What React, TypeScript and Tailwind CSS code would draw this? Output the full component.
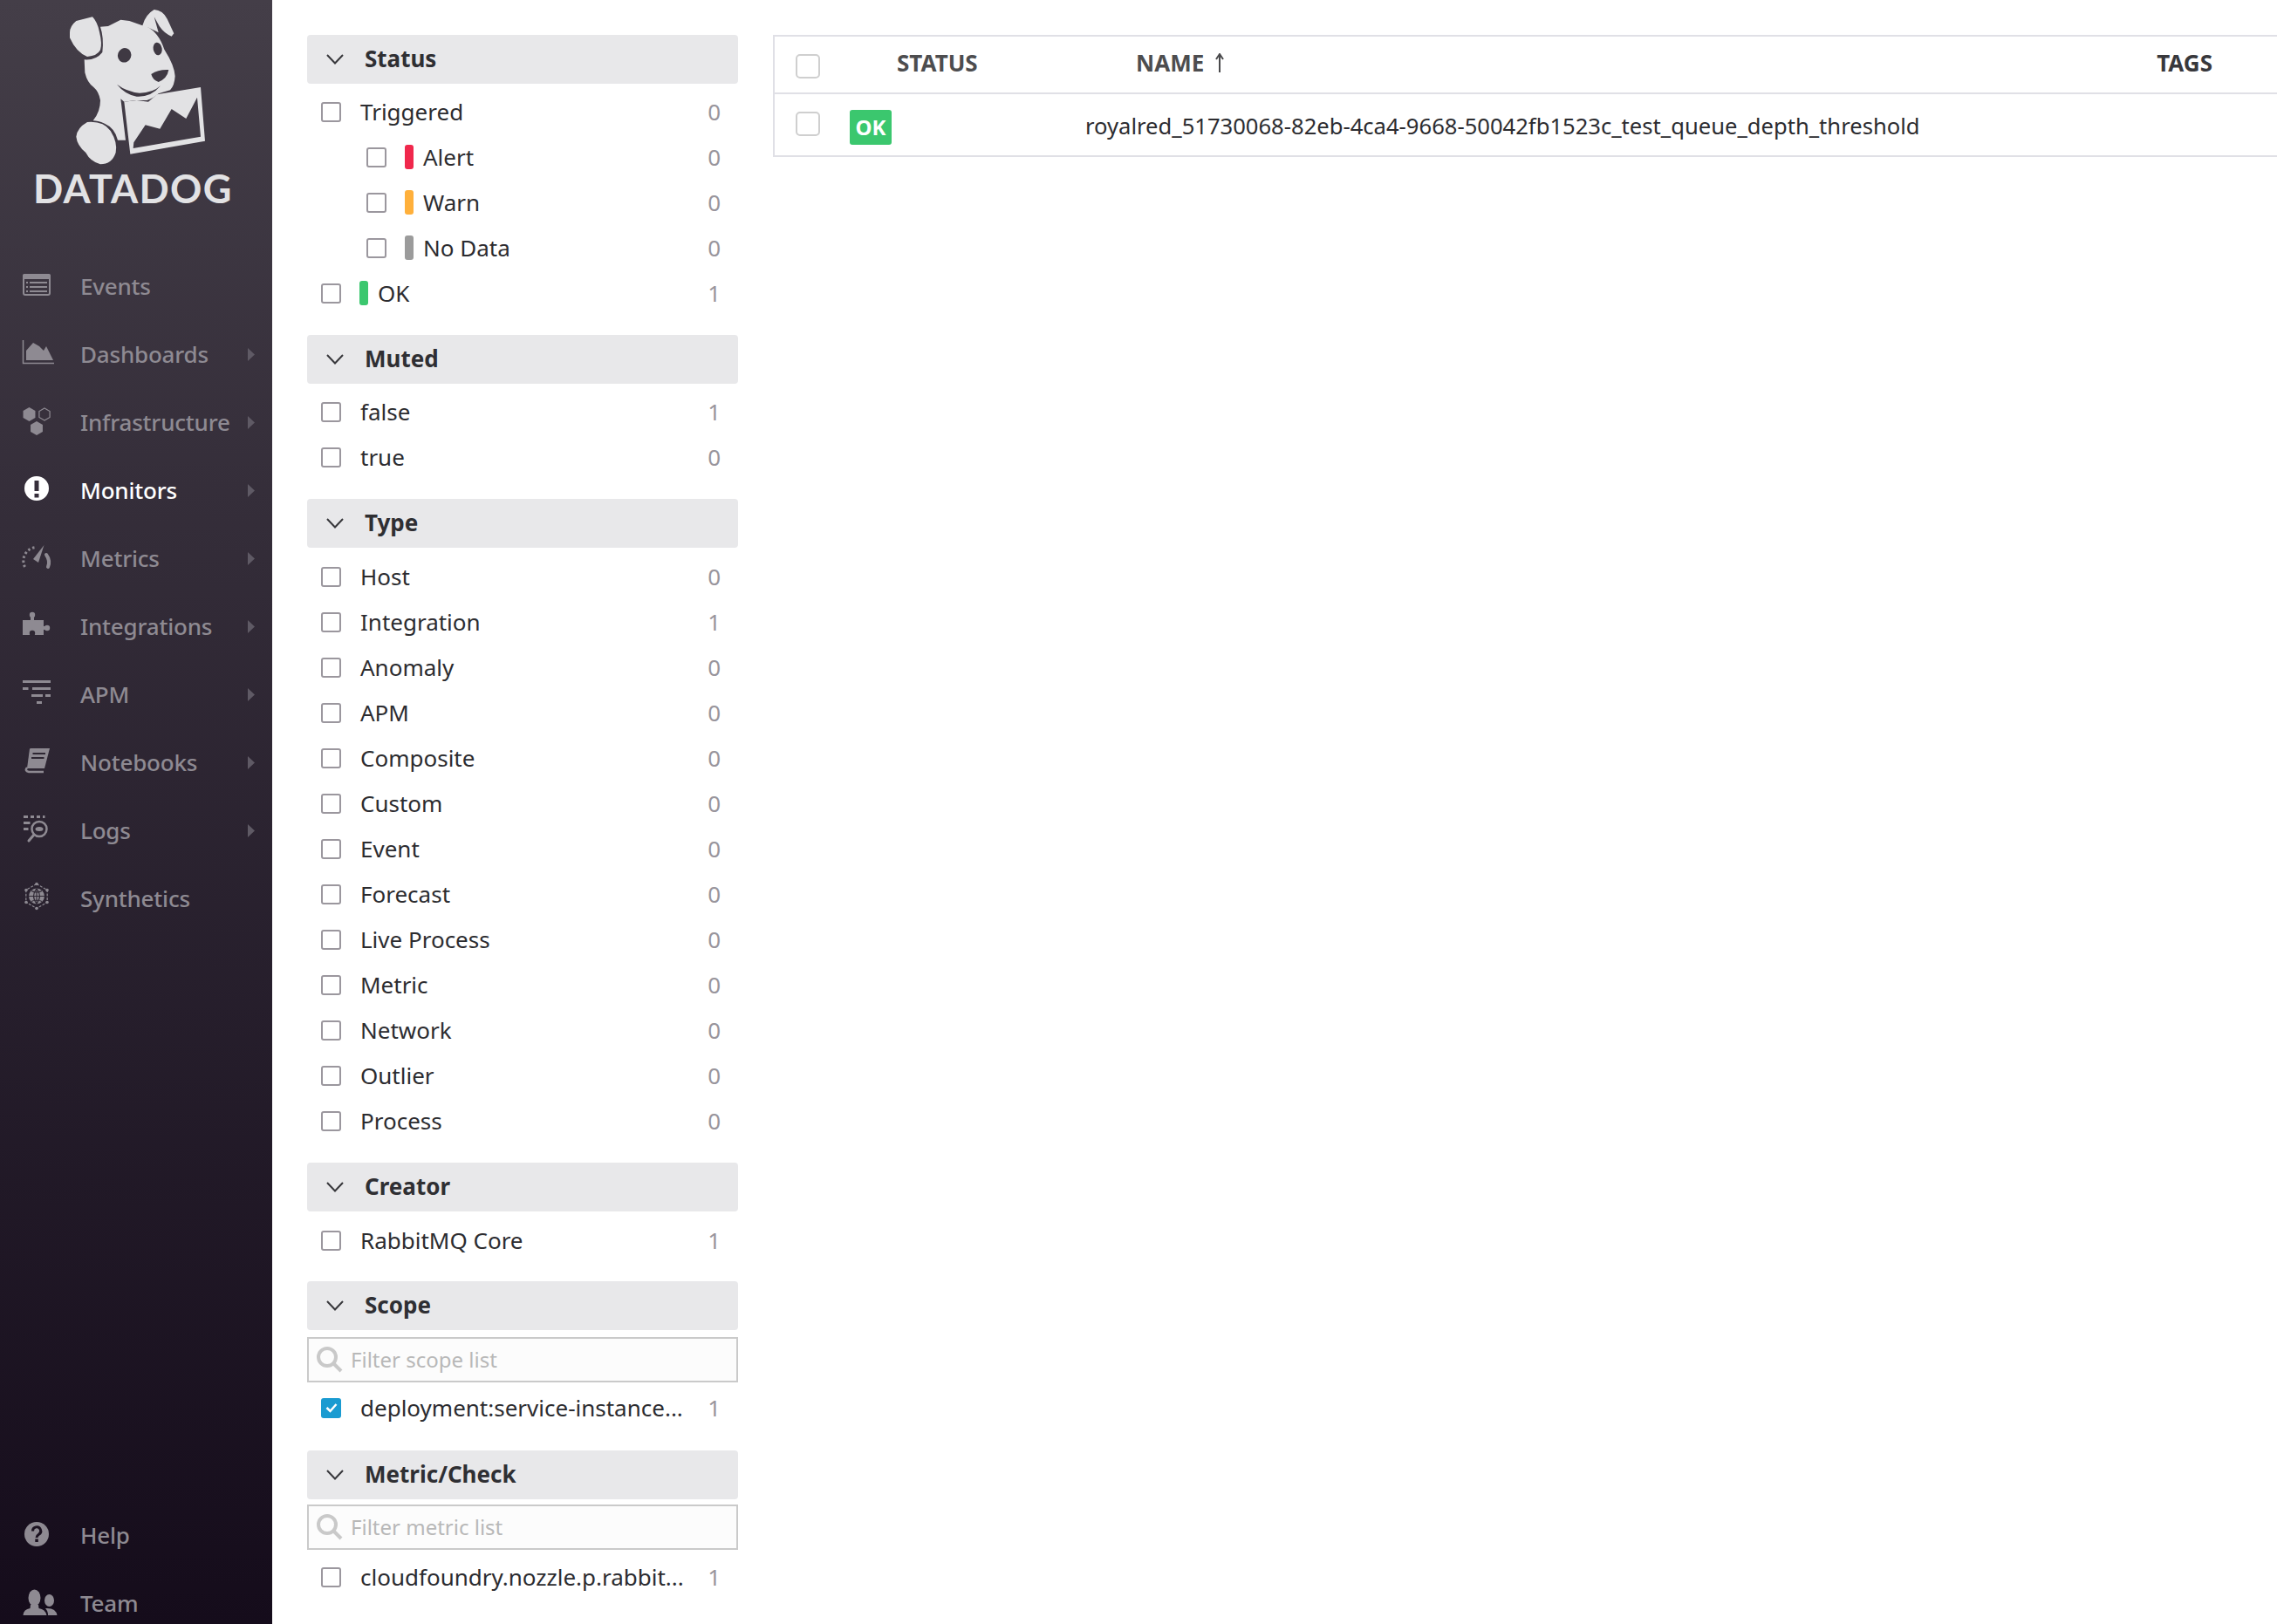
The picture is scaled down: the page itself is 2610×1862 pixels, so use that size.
import React from "react";

const hex = (cx: number, cy: number, r: number) =>
  [
    [cx, cy - r],
    [cx + 0.87 * r, cy - 0.5 * r],
    [cx + 0.87 * r, cy + 0.5 * r],
    [cx, cy + r],
    [cx - 0.87 * r, cy + 0.5 * r],
    [cx - 0.87 * r, cy - 0.5 * r],
  ]
    .map((p) => p.join(","))
    .join(" ");

const NavIcon = ({ name }: { name: string }) => {
  const hole = "#2e2733";
  return (
    <svg viewBox="0 0 44 40" className="h-10 w-11 shrink-0 overflow-visible" fill="currentColor">
      {name === "events" && (
        <>
          <rect x="3" y="7" width="30" height="23" rx="2" fill="none" stroke="currentColor" strokeWidth="2" />
          <rect x="2" y="6" width="32" height="6" rx="2" />
          <path d="M6 15h2v2H6zM10 15h20v2H10zM6 20h2v2H6zM10 20h20v2H10zM6 25h2v2H6zM10 25h20v2H10z" />
        </>
      )}
      {name === "dashboards" && (
        <>
          <path d="M2.500 4V30.500H38" fill="none" stroke="currentColor" strokeWidth="1.500" />
          <polygon points="6,27 6,16 14,7 21,11 26,16 29,11 37,27" />
        </>
      )}
      {name === "infrastructure" && (
        <>
          <polygon points={hex(9.5, 11, 8)} />
          <polygon points={hex(27, 11, 7)} fill="none" stroke="currentColor" strokeWidth="1.200" />
          <polygon points={hex(18, 27, 8)} />
        </>
      )}
      {name === "monitors" && (
        <path
          fillRule="evenodd"
          d="M18 4a14 14 0 1 1 0 28a14 14 0 0 1 0-28zM15.500 9v12h5V9zM15.500 24v4.500h5V24z"
        />
      )}
      {name === "metrics" && (
        <>
          <path d="M4.500 30A15.500 15.500 0 0 1 17 7.500" fill="none" stroke="currentColor" strokeWidth="3" strokeDasharray="2.500 2.700" />
          <polygon points="26.500,5 14,21 20,25" />
          <path d="M29 16Q34 23 31 30" fill="none" stroke="currentColor" strokeWidth="4" strokeLinecap="round" />
        </>
      )}
      {name === "integrations" && (
        <>
          <rect x="2" y="13" width="24" height="17" />
          <rect x="11" y="8" width="4" height="7" />
          <circle cx="13" cy="7" r="3.200" />
          <rect x="24" y="20" width="5" height="4" />
          <circle cx="30" cy="22" r="3.200" />
          <circle cx="13" cy="28" r="3.200" fill={hole} />
          <rect x="11.500" y="26" width="3" height="5" fill={hole} />
        </>
      )}
      {name === "apm" && (
        <path d="M2 4h32v3H2zM2 12h6.500v3H2zM13 12h21v3H13zM12 20h13v3H12zM28 20h6v3h-6zM18 28h6v3h-6z" />
      )}
      {name === "notebooks" && (
        <>
          <path d="M10 4.500Q10.500 4 11.500 4H33L27 27H7z" />
          <path d="M7 26Q4 30 9 31H26" fill="none" stroke="currentColor" strokeWidth="2.500" />
          <path d="M13.500 10H28M12 15H26.500" stroke={hole} strokeWidth="2" />
        </>
      )}
      {name === "logs" && (
        <>
          <path d="M3 3h5v3H3zM11 3h4v3h-4zM18 3h4v3h-4zM25 3h2.500v3H25zM3 10h7.500v3H3zM3 17h5.500v3H3z" />
          <circle cx="21" cy="18.500" r="8.500" fill="none" stroke="currentColor" strokeWidth="2.500" />
          <path d="M15 25L9 32" stroke="currentColor" strokeWidth="3" strokeLinecap="round" />
          <ellipse cx="21" cy="18.500" rx="4.500" ry="2.500" />
        </>
      )}
      {name === "synthetics" && (
        <>
          <polygon points={hex(18, 17.500, 14)} fill="none" stroke="currentColor" strokeWidth="1.200" strokeDasharray="3 1.500" />
          <circle cx="18" cy="17.500" r="9" />
          <path d="M9 17.500h18M18 8.500v18M12 11.500q6 3 12 0M12 23.500q6-3 12 0M18 8.500q-7 9 0 18M18 8.500q7 9 0 18" fill="none" stroke={hole} strokeWidth="1.100" />
          <circle cx="18" cy="3.500" r="1.800" />
          <circle cx="30" cy="10.500" r="1.800" />
          <circle cx="30" cy="24.500" r="1.800" />
          <circle cx="18" cy="31.500" r="1.800" />
          <circle cx="6" cy="24.500" r="1.800" />
          <circle cx="6" cy="10.500" r="1.800" />
        </>
      )}
      {name === "help" && (
        <>
          <circle cx="18" cy="19" r="14" />
          <path d="M13.500 15.500a4.600 4.600 0 1 1 7 3.800c-2 1.300-2.500 2-2.500 3.700" fill="none" stroke="#1b1220" strokeWidth="3" />
          <rect x="16.300" y="24.500" width="3.500" height="3.500" fill="#1b1220" />
        </>
      )}
      {name === "team" && (
        <>
          <ellipse cx="32.500" cy="17" rx="5.500" ry="7" />
          <path d="M28 26Q40 25 41.500 34H31Q31 29 28 26z" />
          <ellipse cx="15.500" cy="14" rx="7" ry="9.500" />
          <path d="M11 22H20L20.500 26Q28 27 29.500 34H2.500Q3 27 10.500 26z" />
        </>
      )}
    </svg>
  );
};

const NavRow = ({ icon, label, arrow = true, active = false }: { icon: string; label: string; arrow?: boolean; active?: boolean }) => (
  <div className={`flex h-[78px] shrink-0 items-center pl-6 pr-5 ${active ? "text-white" : "text-[#8e8a92]"}`}>
    <NavIcon name={icon} />
    <span className="ml-6 text-[26px] font-medium leading-none tracking-[-0.2px]">{label}</span>
    {arrow && (
      <svg viewBox="0 0 8 15" className="ml-auto h-[15px] w-2 shrink-0 fill-[#5f5a65]">
        <polygon points="0,0 8,7.500 0,15" />
      </svg>
    )}
  </div>
);

const Sidebar = () => (
  <div className="flex h-[1862px] w-[312px] shrink-0 flex-col overflow-hidden bg-gradient-to-b from-[#443e48] to-[#150c1b]">
    <div className="h-[289px] shrink-0">
      <svg viewBox="0 0 936 579" className="block h-[193px] w-[312px] fill-[#e2e2e4]">
        <path d="M240 112Q240 90 262 72L318 58Q335 75 342 110Q352 150 345 172Q335 192 300 195Q262 180 240 130z" />
        <path d="M345 92L372 90L415 68L445 72L490 88Q500 50 530 33Q560 35 575 65L598 115L590 125Q565 115 548 90L530 58L545 112L505 92Q545 110 565 170Q600 225 602 262Q600 295 585 310L545 322Q525 340 505 345L465 345L427 350L415 340L432 482L405 482Q395 440 360 425Q335 415 320 415Q345 385 345 345Q340 315 322 300Q300 285 292 250L290 205Q330 208 352 180Q358 130 345 92z" />
        <path d="M262 470Q265 440 300 420Q355 415 380 450Q405 490 398 525Q385 565 345 565Q310 555 295 525Q265 500 262 470z" />
        <path
          fillRule="evenodd"
          d="M427 350L470 345L510 350L540 325L690 300L705 485L448 530zM458 510L460 490L500 430L550 443L590 375L640 408L678 335L690 470z"
        />
        <g fill="#3f3943">
          <ellipse cx="428" cy="190" rx="23" ry="25" transform="rotate(20 428 190)" />
          <ellipse cx="542" cy="168" rx="15" ry="22" transform="rotate(-10 542 168)" />
          <path d="M520 255Q545 238 580 240Q575 270 545 282Q525 275 520 255z" />
          <path d="M402 290Q430 325 470 332Q520 335 552 295Q525 320 480 320Q435 315 402 290z" />
        </g>
      </svg>
      <div className="ml-[38px] font-['Lato',sans-serif] text-[45px] font-bold leading-[46px] tracking-[1.3px] text-[#e2e2e4]">
        DATADOG
      </div>
    </div>
    <NavRow icon="events" label="Events" arrow={false} />
    <NavRow icon="dashboards" label="Dashboards" />
    <NavRow icon="infrastructure" label="Infrastructure" />
    <NavRow icon="monitors" label="Monitors" active />
    <NavRow icon="metrics" label="Metrics" />
    <NavRow icon="integrations" label="Integrations" />
    <NavRow icon="apm" label="APM" />
    <NavRow icon="notebooks" label="Notebooks" />
    <NavRow icon="logs" label="Logs" />
    <NavRow icon="synthetics" label="Synthetics" arrow={false} />
    <div className="mt-[652px]">
      <NavRow icon="help" label="Help" arrow={false} />
      <NavRow icon="team" label="Team" arrow={false} />
    </div>
  </div>
);

const Checkbox = ({ checked = false }: { checked?: boolean }) =>
  checked ? (
    <span className="flex h-[23px] w-[23px] shrink-0 items-center justify-center rounded-[3px] bg-[#1a9bd1]">
      <svg viewBox="0 0 14 12" className="h-3 w-[14px] fill-none stroke-white stroke-[2.500]">
        <path d="M1.500 6L5.500 10L12.500 2" />
      </svg>
    </span>
  ) : (
    <span className="h-[23px] w-[23px] shrink-0 rounded-[3px] border-2 border-[#9b979e] bg-white" />
  );

const FacetRow = ({ label, count, bar, indent = false }: { label: string; count: number; bar?: string; indent?: boolean }) => (
  <div className={`flex h-[52px] items-center pr-5 ${indent ? "pl-[68px]" : "pl-4"}`}>
    <Checkbox />
    {bar ? (
      <>
        <span className={`ml-[21px] h-7 w-[10px] shrink-0 rounded-[3px] ${bar}`} />
        <span className="ml-[11px] text-[26px] text-[#2c2c30]">{label}</span>
      </>
    ) : (
      <span className="ml-[22px] text-[26px] text-[#2c2c30]">{label}</span>
    )}
    <span className="ml-auto text-[26px] text-[#99959c]">{count}</span>
  </div>
);

const FacetHeader = ({ title }: { title: string }) => (
  <div className="flex h-14 items-center rounded-[4px] bg-[#e8e8ea] pl-[22px]">
    <svg viewBox="0 0 20 12" className="h-3 w-5 fill-none stroke-[#37373b] stroke-2">
      <path d="M1 1L10 10.500L19 1" />
    </svg>
    <span className="mb-[2px] ml-6 text-[26px] font-bold leading-none text-[#2f2f33]">{title}</span>
  </div>
);

const FilterInput = ({ placeholder }: { placeholder: string }) => (
  <div className="flex h-[52px] items-center border-2 border-[#cacaca] bg-[#fcfcfc] pl-[9px]">
    <svg viewBox="0 0 30 30" className="h-[30px] w-[30px] shrink-0 fill-none stroke-[#c9c9c9] stroke-[4]">
      <circle cx="12" cy="12" r="10" />
      <path d="M19 19L28 28" />
    </svg>
    <input
      placeholder={placeholder}
      className="ml-[9px] w-full bg-transparent text-[24px] outline-none placeholder:text-[#b8b8b8]"
    />
  </div>
);

const FilterPanel = () => {
  const types = ["Host", "Integration", "Anomaly", "APM", "Composite", "Custom", "Event", "Forecast", "Live Process", "Metric", "Network", "Outlier", "Process"];
  return (
    <div className="h-[1862px] w-[574px] shrink-0 overflow-hidden pl-10 pr-10 pt-10">
      <FacetHeader title="Status" />
      <div className="mb-[22px] mt-[6px]">
        <FacetRow label="Triggered" count={0} />
        <FacetRow label="Alert" count={0} bar="bg-[#f0284c]" indent />
        <FacetRow label="Warn" count={0} bar="bg-[#ffb03b]" indent />
        <FacetRow label="No Data" count={0} bar="bg-[#9b9b9b]" indent />
        <FacetRow label="OK" count={1} bar="bg-[#3bc76e]" />
      </div>
      <FacetHeader title="Muted" />
      <div className="mb-[22px] mt-[6px]">
        <FacetRow label="false" count={1} />
        <FacetRow label="true" count={0} />
      </div>
      <FacetHeader title="Type" />
      <div className="mb-[22px] mt-[7px]">
        {types.map((t) => (
          <FacetRow key={t} label={t} count={t === "Integration" ? 1 : 0} />
        ))}
      </div>
      <FacetHeader title="Creator" />
      <div className="mb-[21px] mt-[7px]">
        <FacetRow label="RabbitMQ Core" count={1} />
      </div>
      <FacetHeader title="Scope" />
      <div className="mt-2">
        <FilterInput placeholder="Filter scope list" />
      </div>
      <div className="mb-[23px] mt-[3px] flex h-[52px] items-center pl-4 pr-5">
        <Checkbox checked />
        <span className="ml-[22px] text-[26px] text-[#2c2c30]">deployment:service-instance...</span>
        <span className="ml-auto text-[26px] text-[#99959c]">1</span>
      </div>
      <FacetHeader title="Metric/Check" />
      <div className="mt-[6px]">
        <FilterInput placeholder="Filter metric list" />
      </div>
      <div className="mt-[5px] flex h-[52px] items-center pl-4 pr-5">
        <Checkbox />
        <span className="ml-[22px] text-[26px] text-[#2c2c30]">cloudfoundry.nozzle.p.rabbit...</span>
        <span className="ml-auto text-[26px] text-[#99959c]">1</span>
      </div>
    </div>
  );
};

const MonitorTable = () => (
  <div className="min-w-0 flex-1 pt-10">
    <div className="border-y-2 border-l-2 border-[#e0e0e6]">
      <div className="flex h-[66px] items-center border-b-2 border-[#e0e0e6] text-[26px] font-bold text-[#4d4d4f]">
        <span className="ml-6 mt-1 h-7 w-7 shrink-0 rounded-[5px] border-2 border-[#cfcfcf]" />
        <span className="mb-[3px] ml-[88px] w-[274px]">STATUS</span>
        <span className="mb-[3px]">NAME</span>
        <svg viewBox="0 0 12 22" className="mb-[5px] ml-3 h-[22px] w-3 fill-none stroke-[#4a4a4c] stroke-2">
          <path d="M6 22V2M2 7L6 1L10 7" />
        </svg>
        <span className="mb-[3px] ml-auto mr-[74px] text-[#38383c]">TAGS</span>
      </div>
      <div className="flex h-[70px] items-center">
        <span className="mb-[2px] ml-6 h-7 w-7 shrink-0 rounded-[5px] border-2 border-[#cfcfcf]" />
        <span className="ml-[34px] mt-[6px] flex h-10 w-12 shrink-0 items-center justify-center rounded-[3px] bg-[#3bc76e] text-[24px] font-bold text-white">
          OK
        </span>
        <span className="ml-[222px] mt-1 text-[25.6px] text-[#2c2c30]">royalred_51730068-82eb-4ca4-9668-50042fb1523c_test_queue_depth_threshold</span>
      </div>
    </div>
  </div>
);

export default function App() {
  return (
    <div className="flex h-[1862px] w-[2610px] overflow-hidden bg-white font-['Noto_Sans',sans-serif]">
      <Sidebar />
      <FilterPanel />
      <MonitorTable />
    </div>
  );
}
